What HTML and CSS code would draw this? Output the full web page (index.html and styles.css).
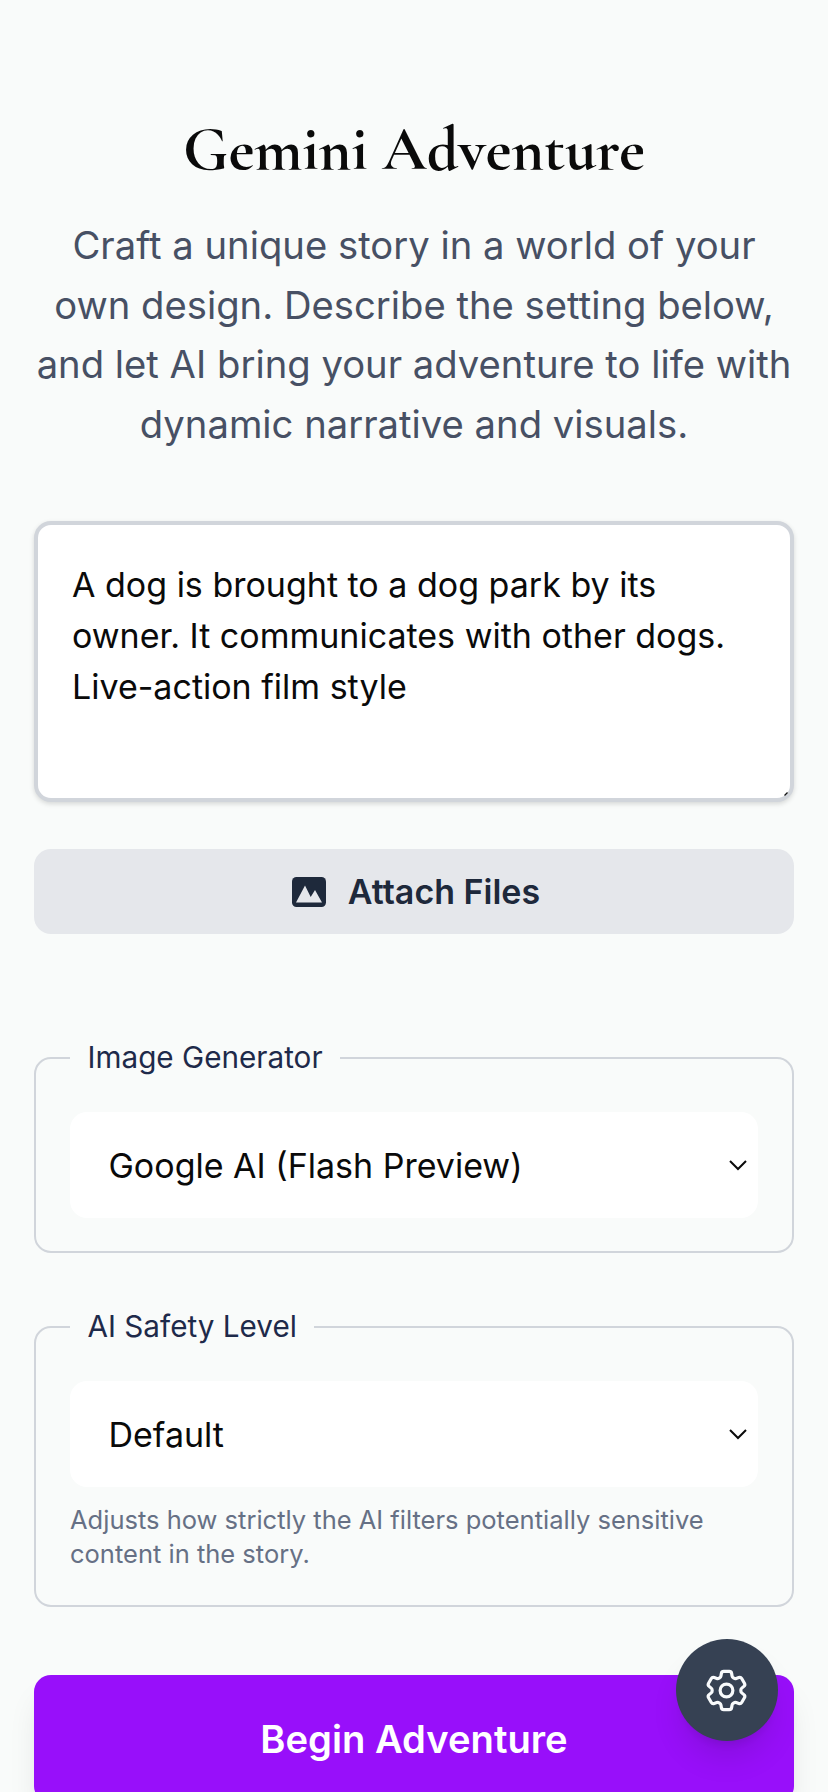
FILE: index.html
```html
<!DOCTYPE html>
<html lang="en">
<head>
<meta charset="utf-8">
<title>Gemini Adventure</title>
<link rel="stylesheet" href="styles.css">
</head>
<body>
<main class="page">
  <h1 class="title">Gemini Adventure</h1>
  <p class="intro">Craft a unique story in a world of your<br>own design. Describe the setting below,<br>and let AI bring your adventure to life with<br>dynamic narrative and visuals.</p>
  <div class="prompt-wrap">
    <textarea class="prompt" spellcheck="false">A dog is brought to a dog park by its
owner. It communicates with other dogs.
Live-action film style</textarea>
    <svg class="grip" viewBox="0 0 4 4"><path d="M0.5 3.5L3.5 0.5" stroke="#111" stroke-width="1.3"/></svg>
  </div>
  <button class="attach">
    <svg class="attach-icon" viewBox="0 0 34 30"><rect width="34" height="30" rx="4.5" fill="#1e293b"/><path d="M4 25.5L13 8.5L18.7 20L23 13L30 25.5Z" fill="#e5e7eb"/></svg>
    <span>Attach Files</span>
  </button>
  <fieldset class="group group-image">
    <legend class="legend">Image Generator</legend>
    <div class="select"><span>Google AI (Flash Preview)</span><svg class="chevron" viewBox="0 0 18 11"><path d="M1 1L9 9L17 1" fill="none" stroke="#0a0a0a" stroke-width="2"/></svg></div>
  </fieldset>
  <fieldset class="group group-safety">
    <legend class="legend">AI Safety Level</legend>
    <div class="select"><span>Default</span><svg class="chevron" viewBox="0 0 18 11"><path d="M1 1L9 9L17 1" fill="none" stroke="#0a0a0a" stroke-width="2"/></svg></div>
    <p class="hint">Adjusts how strictly the AI filters potentially sensitive<br>content in the story.</p>
  </fieldset>
  <button class="begin">Begin Adventure</button>
</main>
<button class="settings" aria-label="Settings">
  <svg class="gear" viewBox="0 0 24 24" fill="none" stroke="#f8fafc" stroke-width="1.5" stroke-linecap="round" stroke-linejoin="round"><path d="M9.594 3.94c.09-.542.56-.94 1.11-.94h2.593c.55 0 1.02.398 1.11.94l.213 1.281c.063.374.313.686.645.87.074.04.147.083.22.127.325.196.72.257 1.075.124l1.217-.456a1.125 1.125 0 0 1 1.37.49l1.296 2.247a1.125 1.125 0 0 1-.26 1.431l-1.003.827c-.293.241-.438.613-.43.992a7.723 7.723 0 0 1 0 .255c-.008.378.137.75.43.991l1.004.827c.424.35.534.955.26 1.43l-1.298 2.247a1.125 1.125 0 0 1-1.369.491l-1.217-.456c-.355-.133-.75-.072-1.076.124a6.47 6.47 0 0 1-.22.128c-.331.183-.581.495-.644.869l-.213 1.281c-.09.543-.56.94-1.11.94h-2.594c-.55 0-1.019-.398-1.11-.94l-.213-1.281c-.062-.374-.312-.686-.644-.87a6.52 6.52 0 0 1-.22-.127c-.325-.196-.72-.257-1.076-.124l-1.217.456a1.125 1.125 0 0 1-1.369-.49l-1.297-2.247a1.125 1.125 0 0 1 .26-1.431l1.004-.827c.292-.24.437-.613.43-.991a6.932 6.932 0 0 1 0-.255c.007-.38-.138-.751-.43-.992l-1.004-.827a1.125 1.125 0 0 1-.26-1.43l1.297-2.247a1.125 1.125 0 0 1 1.37-.491l1.216.456c.356.133.751.072 1.076-.124.072-.044.146-.086.22-.128.332-.183.582-.495.644-.869l.214-1.28Z"/><path d="M15 12a3 3 0 1 1-6 0 3 3 0 0 1 6 0Z"/></svg>
</button>
</body>
</html>
```
FILE: styles.css
```css
* { box-sizing: border-box; }
body {
  margin: 0;
  height: 1792px;
  overflow: hidden;
  background: #f9fbfa;
  font-family: Inter, "Liberation Sans", sans-serif;
}
button { font-family: inherit; border: 0; padding: 0; }
.page {
  display: flex;
  flex-direction: column;
  padding: 112px 34px 0;
}
.title {
  margin: 0;
  height: 76px;
  line-height: 76px;
  text-align: center;
  font-family: "Cormorant Garamond", "Liberation Serif", serif;
  font-size: 62px;
  font-weight: 700;
  color: #0a0a0a;
  white-space: nowrap;
}
.intro {
  margin: 28px -20px 0;
  text-align: center;
  font-size: 38.22px;
  line-height: 59.5px;
  color: #475064;
  white-space: nowrap;
}
.prompt-wrap { position: relative; height: 281px; margin-top: 67px; }
.prompt {
  display: block;
  width: 100%;
  height: 100%;
  padding: 34px;
  border: 4px solid #d1d5db;
  border-radius: 17px;
  background: #fff;
  box-shadow: 0 2px 5px rgba(0, 0, 0, .14);
  font: 34px/51px Inter, "Liberation Sans", sans-serif;
  color: #0a0a0a;
  resize: none;
  overflow: hidden;
  white-space: pre;
}
.grip { position: absolute; right: 6px; bottom: 6px; width: 4px; height: 4px; }
.attach {
  display: flex;
  align-items: center;
  justify-content: center;
  gap: 22px;
  height: 85px;
  margin-top: 47px;
  padding-left: 4px;
  border-radius: 17px;
  background: #e5e7eb;
  color: #1e293b;
  font-size: 34px;
  font-weight: 600;
}
.attach-icon { width: 34px; height: 30px; }
.group {
  margin: 0;
  padding: 33px 34px 33px;
  border: 2px solid #d1d5db;
  border-radius: 17px;
  min-width: 0;
}
.group-image { margin-top: 102px; height: 217px; }
.group-safety { margin-top: 52px; height: 302px; }
.legend {
  padding: 0 17.5px;
  height: 43px;
  line-height: 43px;
  font-size: 29.7px;
  color: #1e2a4a;
  white-space: nowrap;
}
.select {
  display: flex;
  align-items: center;
  justify-content: space-between;
  height: 106px;
  padding: 0 11px 0 38.5px;
  border-radius: 17px;
  background: #fff;
  font-size: 34px;
  color: #0a0a0a;
}
.chevron { width: 18px; height: 11px; }
.hint {
  margin: 16px 0 0;
  font-size: 25.5px;
  line-height: 34px;
  color: #667085;
  white-space: nowrap;
}
.begin {
  flex: none;
  height: 128px;
  margin-top: 68px;
  border-radius: 17px;
  background: #980ffa;
  box-shadow: 0 21px 32px -6px rgba(0, 0, 0, .1), 0 8px 13px -8px rgba(0, 0, 0, .1);
  color: #fff;
  font-size: 38.2px;
  font-weight: 600;
}
.settings {
  position: fixed;
  left: 675.5px;
  top: 1639px;
  width: 102px;
  height: 102px;
  display: flex;
  align-items: center;
  justify-content: center;
  border-radius: 50%;
  background: #364153;
  box-shadow: 0 21px 32px -6px rgba(0, 0, 0, .12), 0 8px 13px -8px rgba(0, 0, 0, .15);
}
.gear { width: 51px; height: 51px; }
```
